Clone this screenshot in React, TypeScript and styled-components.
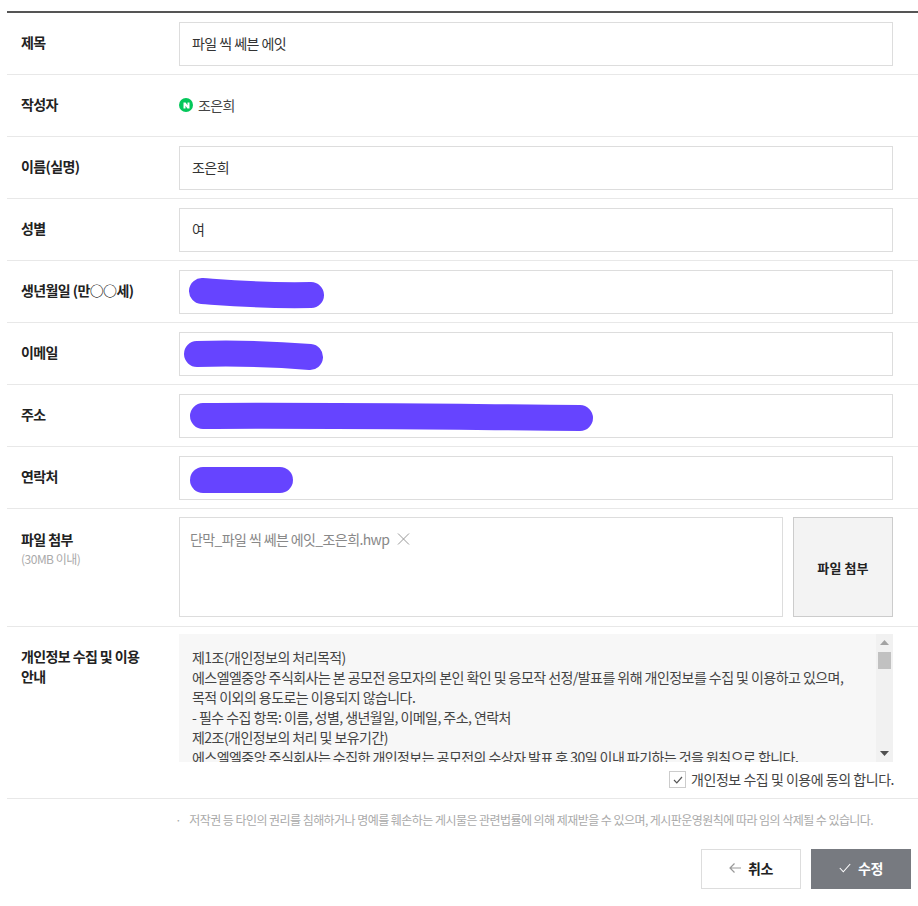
import React from 'react'
import styled, { createGlobalStyle } from 'styled-components'

const GlobalStyle = createGlobalStyle`
  html, body {
    margin: 0;
    padding: 0;
    background: #fff;
  }
  body {
    font-family: "Noto Sans CJK KR", "Noto Sans", sans-serif;
    color: #333;
  }
`

const scribbles: Record<string, { width: number; d: string; offset: number }> = {
  birth: { width: 135, offset: 9, d: 'M13 20 C40 22 70 25 122 24' },
  email: { width: 141, offset: 3, d: 'M14 21 C50 20 90 21 127 24' },
  address: { width: 405, offset: 9, d: 'M14 21 C130 20 270 22 391 23' },
  phone: { width: 104, offset: 9, d: 'M14 23 C40 23 65 23 91 23' },
}

const privacyLines = [
  '제1조(개인정보의 처리목적)',
  '에스엘엘중앙 주식회사는 본 공모전 응모자의 본인 확인 및 응모작 선정/발표를 위해 개인정보를 수집 및 이용하고 있으며,',
  '목적 이외의 용도로는 이용되지 않습니다.',
  '- 필수 수집 항목: 이름, 성별, 생년월일, 이메일, 주소, 연락처',
  '제2조(개인정보의 처리 및 보유기간)',
  '에스엘엘중앙 주식회사는 수집한 개인정보는 공모전의 수상자 발표 후 30일 이내 파기하는 것을 원칙으로 합니다.',
]

const Page = styled.div`
  width: 918px;
  height: 906px;
  padding: 11px 0 0 7px;
  box-sizing: border-box;
  overflow: hidden;
`

const Form = styled.div`
  border-top: 2px solid #555;
`

const Row = styled.div`
  display: flex;
  align-items: flex-start;
  padding: 9px 25px 8px 14px;
  border-bottom: 1px solid #e8e8e8;
`

const FileRow = styled(Row)`
  padding-top: 8px;
  padding-bottom: 9px;
`

const PrivacyRow = styled(Row)`
  padding-top: 7px;
  padding-bottom: 0;
  height: 172px;
  box-sizing: border-box;
`

const Label = styled.div<{ $top?: number }>`
  flex: 0 0 158px;
  padding-top: ${p => p.$top ?? 10}px;
  font-size: 14px;
  line-height: 20px;
  font-weight: 700;
  letter-spacing: -0.6px;
  color: #222;
`

const SubLabel = styled.div`
  font-size: 12px;
  line-height: 20px;
  font-weight: 400;
  letter-spacing: -0.5px;
  color: #aaa;
`

const Field = styled.div`
  flex: 1;
  height: 44px;
  box-sizing: border-box;
  border: 1px solid #ddd;
  padding: 0 12px 2px;
  display: flex;
  align-items: center;
  font-size: 14px;
  letter-spacing: -0.55px;
  color: #333;
  position: relative;
`

const Plain = styled.div`
  flex: 1;
  height: 44px;
  padding-bottom: 2px;
  box-sizing: border-box;
  display: flex;
  align-items: center;
  gap: 5px;
  font-size: 14px;
  letter-spacing: -0.6px;
  color: #444;
`

const NaverBadge = styled.span`
  width: 14px;
  height: 14px;
  border-radius: 50%;
  background: #03c75a;
  color: #fff;
  display: inline-flex;
  align-items: center;
  justify-content: center;
`

const Scribble = styled.svg<{ $left: number }>`
  position: absolute;
  left: ${p => p.$left}px;
  top: 0;
`

const FileBox = styled.div`
  flex: 1;
  height: 100px;
  box-sizing: border-box;
  border: 1px solid #ddd;
  padding: 11px 10px;
  display: flex;
  align-items: flex-start;
  gap: 8px;
  font-size: 14px;
  line-height: 20px;
  letter-spacing: -0.6px;
  color: #888;
`

const FileButton = styled.div`
  flex: 0 0 100px;
  height: 100px;
  margin-left: 10px;
  box-sizing: border-box;
  border: 1px solid #ccc;
  background: #f3f3f3;
  display: flex;
  align-items: center;
  justify-content: center;
  font-size: 13px;
  font-weight: 700;
  letter-spacing: 0.1px;
  color: #222;
`

const PrivacyBody = styled.div`
  flex: 1;
  display: flex;
  flex-direction: column;
`

const TermsBox = styled.div`
  height: 128px;
  display: flex;
  background: #f7f7f7;
  overflow: hidden;
`

const TermsText = styled.div`
  flex: 1;
  padding: 13px 0 0 13px;
  font-size: 14px;
  line-height: 20px;
  letter-spacing: -0.55px;
  color: #444;
  white-space: nowrap;
  overflow: hidden;
`

const ScrollTrack = styled.div`
  flex: 0 0 17px;
  background: #f1f1f1;
  display: flex;
  flex-direction: column;
  align-items: center;
  justify-content: space-between;
  padding: 6px 0;
  box-sizing: border-box;
  position: relative;
`

const ScrollThumb = styled.div`
  position: absolute;
  top: 18px;
  left: 2px;
  width: 13px;
  height: 17px;
  background: #c1c1c1;
`

const Agree = styled.div`
  display: flex;
  justify-content: flex-end;
  align-items: center;
  gap: 5px;
  margin: 9px -1px 0 0;
  font-size: 14px;
  line-height: 17px;
  letter-spacing: -0.47px;
  color: #444;
`

const CheckBox = styled.span`
  width: 17px;
  height: 17px;
  box-sizing: border-box;
  border: 1px solid #ccc;
  background: #fff;
  display: inline-flex;
  align-items: center;
  justify-content: center;
`

const Notice = styled.div`
  padding: 12px 0 0 168px;
  display: flex;
  gap: 8px;
  font-size: 12px;
  line-height: 18px;
  letter-spacing: -0.55px;
  color: #aaa;
`

const Actions = styled.div`
  display: flex;
  justify-content: flex-end;
  gap: 10px;
  margin-top: 20px;
  padding-right: 7px;
`

const ActionButton = styled.div<{ $primary?: boolean }>`
  width: 100px;
  height: 40px;
  box-sizing: border-box;
  padding-bottom: 2px;
  border: 1px solid ${p => (p.$primary ? '#777a80' : '#ddd')};
  background: ${p => (p.$primary ? '#777a80' : '#fff')};
  color: ${p => (p.$primary ? '#fff' : '#222')};
  display: flex;
  align-items: center;
  justify-content: center;
  gap: 7px;
  font-size: 14px;
  font-weight: 700;
  letter-spacing: -0.5px;
`

const Redacted = ({ name }: { name: string }) => {
  const s = scribbles[name]
  return (
    <Scribble $left={s.offset} width={s.width} height={42} viewBox={`0 0 ${s.width} 42`} fill="none">
      <path d={s.d} stroke="#6644ff" strokeWidth={26} strokeLinecap="round" />
    </Scribble>
  )
}

export default function App() {
  return (
    <Page>
      <GlobalStyle />
      <Form>
        <Row>
          <Label>제목</Label>
          <Field>파일 씩 쎄븐 에잇</Field>
        </Row>
        <Row>
          <Label>작성자</Label>
          <Plain>
            <NaverBadge>
              <svg width="7" height="7" viewBox="0 0 7 7">
                <path d="M0.5 0.5H2.6L4.5 3.3V0.5H6.5V6.5H4.4L2.5 3.7V6.5H0.5Z" fill="#fff" />
              </svg>
            </NaverBadge>
            조은희
          </Plain>
        </Row>
        <Row>
          <Label>이름(실명)</Label>
          <Field>조은희</Field>
        </Row>
        <Row>
          <Label>성별</Label>
          <Field>여</Field>
        </Row>
        <Row>
          <Label>생년월일 (만○○세)</Label>
          <Field><Redacted name="birth" /></Field>
        </Row>
        <Row>
          <Label>이메일</Label>
          <Field><Redacted name="email" /></Field>
        </Row>
        <Row>
          <Label>주소</Label>
          <Field><Redacted name="address" /></Field>
        </Row>
        <Row>
          <Label>연락처</Label>
          <Field><Redacted name="phone" /></Field>
        </Row>
        <FileRow>
          <Label $top={12}>
            파일 첨부
            <SubLabel>(30MB 이내)</SubLabel>
          </Label>
          <FileBox>
            <span>단막_파일 씩 쎄븐 에잇_조은희.hwp</span>
            <svg width="13" height="20" viewBox="0 0 13 20" fill="none">
              <path d="M1 4.5L12 15.5M12 4.5L1 15.5" stroke="#999" strokeWidth="1" />
            </svg>
          </FileBox>
          <FileButton>파일 첨부</FileButton>
        </FileRow>
        <PrivacyRow>
          <Label $top={12}>
            개인정보 수집 및 이용
            <br />
            안내
          </Label>
          <PrivacyBody>
            <TermsBox>
              <TermsText>
                {privacyLines.map(line => (
                  <div key={line}>{line}</div>
                ))}
              </TermsText>
              <ScrollTrack>
                <svg width="9" height="5" viewBox="0 0 9 5"><path d="M4.5 0L9 5H0Z" fill="#a3a3a3" /></svg>
                <ScrollThumb />
                <svg width="9" height="5" viewBox="0 0 9 5"><path d="M0 0H9L4.5 5Z" fill="#505050" /></svg>
              </ScrollTrack>
            </TermsBox>
            <Agree>
              <CheckBox>
                <svg width="10" height="8" viewBox="0 0 10 8" fill="none">
                  <path d="M1 4L3.8 6.8L9 1" stroke="#555" strokeWidth="1.2" />
                </svg>
              </CheckBox>
              개인정보 수집 및 이용에 동의 합니다.
            </Agree>
          </PrivacyBody>
        </PrivacyRow>
      </Form>
      <Notice>
        <span>·</span>
        <span>저작권 등 타인의 권리를 침해하거나 명예를 훼손하는 게시물은 관련법률에 의해 제재받을 수 있으며, 게시판운영원칙에 따라 임의 삭제될 수 있습니다.</span>
      </Notice>
      <Actions>
        <ActionButton>
          <svg width="12" height="10" viewBox="0 0 12 10" fill="none">
            <path d="M5.5 0.5L1 5L5.5 9.5M1 5H12" stroke="#999" strokeWidth="1.2" />
          </svg>
          취소
        </ActionButton>
        <ActionButton $primary>
          <svg width="12" height="10" viewBox="0 0 12 10" fill="none">
            <path d="M0.8 5L4.3 8.8L11.2 1" stroke="#fff" strokeWidth="1.1" />
          </svg>
          수정
        </ActionButton>
      </Actions>
    </Page>
  )
}
